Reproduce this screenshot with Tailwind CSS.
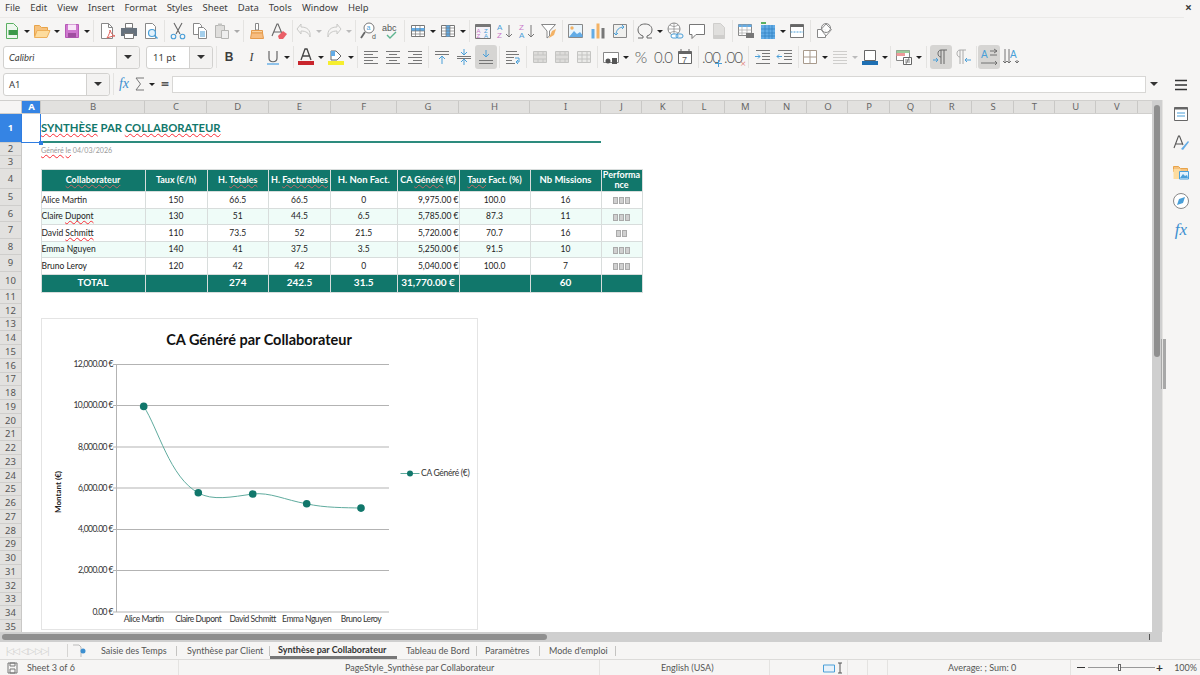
<!DOCTYPE html>
<html lang="fr">
<head>
<meta charset="UTF-8">
<title>Synthèse par Collaborateur - LibreOffice Calc</title>
<script src="https://cdn.jsdelivr.net/npm/@tailwindcss/browser@4"></script>
</head>
<body class="bg-[#f6f5f4] overflow-hidden">
<div class="w-[1200px] h-[675px] flex flex-col font-['Noto_Sans',sans-serif] text-[#3d3d3d] [&_svg]:shrink-0">

  <!-- menu bar -->
  <div class="h-[18px] flex items-center justify-between pl-[5px] pr-[7px] text-[9.5px] border-b border-[#ebeae8] mr-[16px]">
    <div class="flex gap-[10px]">
      <span>File</span><span>Edit</span><span>View</span><span>Insert</span><span>Format</span><span>Styles</span><span>Sheet</span><span>Data</span><span>Tools</span><span>Window</span><span>Help</span>
    </div>
  </div>
  <span class="absolute left-[1185px] top-[1px] text-[12px] font-bold leading-[14px]">×</span>

  <!-- standard toolbar -->
  <div class="h-[26px] flex items-center pl-[1px]">
    <svg class="w-[22px] h-[18px]" viewBox="0 0 18 18"><path d="M3.500 1.500h7l4 4v11h-11z" fill="#eef7ee" stroke="#5bb062"/><path d="M5.500 8h9v5h-9z" fill="#3c9a49"/></svg>
    <span class="w-[8px] flex justify-center"><i class="border-x-[3px] border-t-[3px] border-x-transparent border-t-[#222]"></i></span>
    <svg class="w-[22px] h-[18px]" viewBox="0 0 18 18"><path d="M1.500 3.500h5l2 2h6v3h-10l-3 6z" fill="#f6c27e" stroke="#e8a44a"/><path d="M4 8.500h13l-3 7H1.500z" fill="#fddc9e" stroke="#eeb05a"/></svg>
    <span class="w-[8px] flex justify-center"><i class="border-x-[3px] border-t-[3px] border-x-transparent border-t-[#222]"></i></span>
    <svg class="w-[22px] h-[18px]" viewBox="0 0 18 18"><path d="M2.500 2.500h13v13h-13z" fill="#cf78cf" stroke="#b658b6"/><path d="M5 2.500h8V8H5z" fill="#f8e6f8"/><path d="M5 11h8v4.500H5z" fill="#a04ea0"/></svg>
    <span class="w-[8px] flex justify-center"><i class="border-x-[3px] border-t-[3px] border-x-transparent border-t-[#222]"></i></span>
    <i class="w-px h-[22px] bg-[#e4e3e1] mx-[2px]"></i>
    <svg class="w-[22px] h-[18px]" viewBox="0 0 18 18"><path d="M3.500 1.500h7l4 4v11h-11z" fill="#fff" stroke="#888"/><path d="M10.500 1.500v4h4" fill="none" stroke="#888"/><path d="M9 16c2-3 3-6 3-8 1 3 2 5 5 6-3 0-5 1-8 2z" fill="none" stroke="#e0635c"/></svg>
    <svg class="w-[22px] h-[18px]" viewBox="0 0 18 18"><path d="M5.500 1.500h7V6h-7z" fill="#fff" stroke="#777"/><path d="M1 6h16v8H1z" fill="#66717c"/><path d="M4.500 11.500h9v5h-9z" fill="#fff" stroke="#777"/></svg>
    <svg class="w-[22px] h-[18px]" viewBox="0 0 18 18"><path d="M3.500 1.500h7l3 3v12h-10z" fill="#fff" stroke="#888"/><circle cx="10" cy="11" r="3.500" fill="#e2f1fb" stroke="#4a9fd8" stroke-width="1.200"/><path d="M12.500 13.500l3 3" stroke="#4a9fd8" stroke-width="1.400"/></svg>
    <i class="w-px h-[22px] bg-[#e4e3e1] mx-[2px]"></i>
    <svg class="w-[22px] h-[18px]" viewBox="0 0 18 18"><path d="M5 1l6 11M13 1L7 12" stroke="#666" stroke-width="1.100" fill="none"/><circle cx="4.500" cy="14.500" r="2.300" fill="none" stroke="#4a9fd8" stroke-width="1.100"/><circle cx="13.500" cy="14.500" r="2.300" fill="none" stroke="#4a9fd8" stroke-width="1.100"/></svg>
    <svg class="w-[22px] h-[18px]" viewBox="0 0 18 18"><path d="M2.500 1.500h6l2 2v9h-8z" fill="#fff" stroke="#888"/><path d="M7.500 5.500h5l3 3v8h-8z" fill="#fff" stroke="#888"/><path d="M9 10h5M9 12h5M9 14h5" stroke="#4a9fd8"/></svg>
    <svg class="w-[22px] h-[18px]" viewBox="0 0 18 18"><path d="M2.500 3.500h9v12h-9z" fill="#dfdedc" stroke="#b5b5b3"/><path d="M5 1.500h4V4H5z" fill="#c4c4c2"/><path d="M8.500 8.500h7v8h-7z" fill="#eee" stroke="#b5b5b3"/></svg>
    <span class="w-[8px] flex justify-center"><i class="border-x-[3px] border-t-[3px] border-x-transparent border-t-[#aaa]"></i></span>
    <i class="w-px h-[22px] bg-[#e4e3e1] mx-[2px]"></i>
    <svg class="w-[22px] h-[18px]" viewBox="0 0 18 18"><path d="M7.500 1.500h3V8h-3z" fill="#fff" stroke="#888"/><path d="M3.500 8.500h11v2.500h-11z" fill="#f9d3a2" stroke="#e59a4a"/><path d="M3.500 11h11l1 5.500h-13z" fill="#f7bd80" stroke="#e59a4a"/></svg>
    <svg class="w-[22px] h-[18px]" viewBox="0 0 18 18"><path d="M2 14L7 2h1l5 12M4 10h7" fill="none" stroke="#666" stroke-width="1.100"/><path d="M8 14l5-5 4 3-4 5H9z" fill="#ea5f67"/></svg>
    <i class="w-px h-[22px] bg-[#e4e3e1] ml-[2px]"></i>
    <svg class="w-[22px] h-[18px]" viewBox="0 0 18 18"><path d="M2 7l4-5v3c6 0 10 3 9 10-1-4-4-6-9-6v3z" fill="none" stroke="#c9c9c7"/></svg>
    <span class="w-[8px] flex justify-center"><i class="border-x-[3px] border-t-[3px] border-x-transparent border-t-[#bbb]"></i></span>
    <svg class="w-[22px] h-[18px]" viewBox="0 0 18 18"><path d="M16 7l-4-5v3C6 5 2 8 3 15c1-4 4-6 9-6v3z" fill="none" stroke="#c9c9c7"/></svg>
    <span class="w-[8px] flex justify-center"><i class="border-x-[3px] border-t-[3px] border-x-transparent border-t-[#bbb]"></i></span>
    <i class="w-px h-[22px] bg-[#e4e3e1] mx-[2px]"></i>
    <svg class="w-[22px] h-[18px]" viewBox="0 0 18 18"><circle cx="9" cy="6" r="5" fill="#fff" stroke="#777"/><path d="M5 10l-4 6" stroke="#666" stroke-width="1.800"/><text x="6.500" y="8" font-size="7" fill="#4a9fd8" font-family="Liberation Sans">a</text><text x="12" y="17" font-size="7" fill="#555" font-family="Liberation Sans">d</text></svg>
    <svg class="w-[22px] h-[18px]" viewBox="0 0 18 18"><text x="0" y="9" font-size="9" fill="#555" font-family="Liberation Sans">abc</text><path d="M5 13l3 3 6-6" fill="none" stroke="#5db590" stroke-width="1.400"/></svg>
    <i class="w-px h-[22px] bg-[#e4e3e1] mx-[2px]"></i>
    <svg class="w-[22px] h-[18px]" viewBox="0 0 18 18"><path d="M2.500 3.500h13v11h-13z" fill="#fff" stroke="#777"/><path d="M2.500 6h13v3h-13z" fill="#63ace6"/><path d="M2.500 9h13M2.500 12h13M6.500 3.500v11M11 3.500v11" stroke="#777" stroke-width=".7"/></svg>
    <span class="w-[8px] flex justify-center"><i class="border-x-[3px] border-t-[3px] border-x-transparent border-t-[#222]"></i></span>
    <svg class="w-[22px] h-[18px]" viewBox="0 0 18 18"><path d="M2.500 3.500h13v11h-13z" fill="#fff" stroke="#777"/><path d="M7 3.500h4v11H7z" fill="#63ace6"/><path d="M2.500 6h13M2.500 9h13M2.500 12h13M7 3.500v11M11 3.500v11" stroke="#777" stroke-width=".7"/></svg>
    <span class="w-[8px] flex justify-center"><i class="border-x-[3px] border-t-[3px] border-x-transparent border-t-[#222]"></i></span>
    <i class="w-px h-[22px] bg-[#e4e3e1] mx-[2px]"></i>
    <svg class="w-[22px] h-[18px]" viewBox="0 0 18 18"><path d="M1.500 2.500h15v14h-15z" fill="#f5f2f7" stroke="#777"/><path d="M1.500 2.500h15V5h-15z" fill="#777"/><text x="2.500" y="11" font-size="6" fill="#c878c8" font-family="Liberation Sans">A</text><text x="2.500" y="16" font-size="6" fill="#c878c8" font-family="Liberation Sans">Z</text><text x="10" y="11" font-size="6" fill="#4a9fd8" font-family="Liberation Sans">Z</text><text x="10" y="16" font-size="6" fill="#4a9fd8" font-family="Liberation Sans">A</text></svg>
    <svg class="w-[22px] h-[18px]" viewBox="0 0 18 18"><text x="1" y="8" font-size="8" fill="#4a9fd8" font-family="Liberation Sans">A</text><text x="1" y="16" font-size="8" fill="#c878c8" font-family="Liberation Sans">Z</text><path d="M13 3v12M10 12l3 3 3-3" fill="none" stroke="#777"/></svg>
    <svg class="w-[22px] h-[18px]" viewBox="0 0 18 18"><text x="1" y="8" font-size="8" fill="#c878c8" font-family="Liberation Sans">Z</text><text x="1" y="16" font-size="8" fill="#4a9fd8" font-family="Liberation Sans">A</text><path d="M13 3v12M10 12l3 3 3-3" fill="none" stroke="#777"/></svg>
    <svg class="w-[22px] h-[18px]" viewBox="0 0 18 18"><path d="M1.500 2.500h14l-6 6.500v5l-2.500 2V9z" fill="#fff" stroke="#888"/><path d="M9 16l3-7 4-2-2 6z" fill="#f3b265"/></svg>
    <i class="w-px h-[22px] bg-[#e4e3e1] mx-[2px]"></i>
    <svg class="w-[22px] h-[18px]" viewBox="0 0 18 18"><path d="M1.500 2.500h14v13h-14z" fill="#eaf5fc" stroke="#888"/><circle cx="5" cy="6" r="1.700" fill="#f3b265"/><path d="M2 15l5-6 3 3 3-2 2.500 3v2z" fill="#63ace6"/></svg>
    <svg class="w-[22px] h-[18px]" viewBox="0 0 18 18"><path d="M2.500 7h3v9.500h-3z" fill="#63ace6"/><path d="M7.500 1.500h3v15h-3z" fill="#f3b265"/><path d="M12.500 6h3v10.500h-3z" fill="#777"/></svg>
    <svg class="w-[22px] h-[18px]" viewBox="0 0 18 18"><path d="M2.500 2.500h13v13h-13z" fill="#f0f0ee" stroke="#888"/><path d="M5 13c0-5 3-8 8-8M11 3l2 2-2 2M3 11l2 2 2-2" fill="none" stroke="#4a9fd8"/></svg>
    <i class="w-px h-[22px] bg-[#e4e3e1] ml-[2px]"></i>
    <svg class="w-[22px] h-[18px]" viewBox="0 0 18 18"><path d="M2 16h5v-2C4 13 2 11 2 8c0-4 3-6 7-6s7 2 7 6c0 3-2 5-5 6v2h5" fill="none" stroke="#666"/></svg>
    <span class="w-[8px] flex justify-center"><i class="border-x-[3px] border-t-[3px] border-x-transparent border-t-[#222]"></i></span>
    <svg class="w-[22px] h-[18px]" viewBox="0 0 18 18"><circle cx="8" cy="7" r="6" fill="#fff" stroke="#888"/><path d="M2 7h12M8 1v12M4 3c3 2 5 2 8 0M4 11c3-2 5-2 8 0" fill="none" stroke="#888" stroke-width=".7"/><rect x="5" y="12" width="7" height="4" rx="2" fill="#fff" stroke="#4a9fd8"/><rect x="10" y="12" width="7" height="4" rx="2" fill="none" stroke="#4a9fd8"/></svg>
    <svg class="w-[22px] h-[18px]" viewBox="0 0 18 18"><path d="M1.500 2.500h15v10H8l-4 4v-4H1.500z" fill="#fff" stroke="#777"/></svg>
    <svg class="w-[22px] h-[18px]" viewBox="0 0 18 18"><path d="M3.500 1.500h7l4 4v11h-11z" fill="#e0dfdd" stroke="#cfcecc"/><path d="M3.500 13h11v3.500h-11z" fill="#cfcecc"/></svg>
    <i class="w-px h-[22px] bg-[#e4e3e1] mx-[2px]"></i>
    <svg class="w-[22px] h-[18px]" viewBox="0 0 18 18"><path d="M1.500 2.500h13v11h-13z" fill="#fff" stroke="#888"/><path d="M1.500 2.500h13V5h-13z" fill="#63ace6"/><path d="M1.500 8h13M1.500 11h13M5 2.500v11M10 2.500v11" stroke="#aaa" stroke-width=".7"/><path d="M9 11h8v5H9z" fill="#777"/></svg>
    <svg class="w-[22px] h-[18px]" viewBox="0 0 18 18"><path d="M2 3h14v14H2z" fill="#63ace6"/><path d="M2 7h14M2 11h14M2 14h14M6 3v14M10 3v14M13 3v14" stroke="#2f80bf" stroke-width=".7"/><path d="M2 1h5" stroke="#5bb062" stroke-width="2"/></svg>
    <span class="w-[7px] flex justify-center"><i class="border-x-[3px] border-t-[3px] border-x-transparent border-t-[#222]"></i></span>
    <svg class="w-[22px] h-[18px]" viewBox="0 0 18 18"><path d="M2.500 2.500h13v13h-13z" fill="#fff" stroke="#777"/><path d="M2.500 2.500h13V5h-13z" fill="#666"/><path d="M2.500 10h13" stroke="#4a9fd8" stroke-dasharray="2 1"/></svg>
    <i class="w-px h-[22px] bg-[#e4e3e1] mx-[2px]"></i>
    <svg class="w-[22px] h-[18px]" viewBox="0 0 18 18"><path d="M2.500 7.500h8v8h-8z" fill="#fff" stroke="#888"/><path d="M11 2l5.500 5.500L11 14 6 7.500z" fill="#fff" stroke="#888" opacity=".9"/><circle cx="11" cy="6" r="4.500" fill="none" stroke="#888"/></svg>
  </div>

  <!-- formatting toolbar -->
  <div class="h-[26px] flex items-center pl-[3px]">
    <div class="w-[137px] h-[23px] flex bg-white border border-[#d2d1cf] rounded-[3px]">
      <span class="flex-1 pl-[5px] italic text-[9.5px] leading-[21px] font-['Lato',sans-serif]">Calibri</span>
      <span class="w-[23px] bg-[#f3f2f1] border-l border-[#d2d1cf] rounded-r-[3px] flex items-center justify-center"><i class="border-x-[4px] border-t-[4px] border-x-transparent border-t-[#333]"></i></span>
    </div>
    <div class="w-[67px] h-[23px] ml-[6px] flex bg-white border border-[#d2d1cf] rounded-[3px]">
      <span class="flex-1 pl-[6px] text-[9.5px] leading-[21px]">11 pt</span>
      <span class="w-[23px] bg-[#f3f2f1] border-l border-[#d2d1cf] rounded-r-[3px] flex items-center justify-center"><i class="border-x-[4px] border-t-[4px] border-x-transparent border-t-[#333]"></i></span>
    </div>
    <i class="w-px h-[22px] bg-[#e4e3e1] ml-[3px] mr-[1px]"></i>
    <span class="w-[22px] text-center font-bold text-[12px] leading-[18px] font-['Liberation_Sans',sans-serif]">B</span>
    <span class="w-[23px] text-center italic text-[12px] leading-[18px] font-['Liberation_Serif',serif]">I</span>
    <svg class="w-[20px] h-[18px]" viewBox="0 0 18 18"><path d="M5 3v7c0 5 8 5 8 0V3" fill="none" stroke="#666" stroke-width="1.200"/><path d="M3 16h12" stroke="#63ace6" stroke-width="1.400"/></svg>
    <span class="w-[8px] flex justify-center"><i class="border-x-[3px] border-t-[3px] border-x-transparent border-t-[#222]"></i></span>
    <i class="w-px h-[22px] bg-[#e4e3e1] mx-[1.500px]"></i>
    <svg class="w-[22px] h-[18px]" viewBox="0 0 18 18"><path d="M4 12L8 1h2l4 11M6 8h6" fill="none" stroke="#444" stroke-width="1.300"/><path d="M1 13h16v4H1z" fill="#c9252c"/></svg>
    <span class="w-[8px] flex justify-center"><i class="border-x-[3px] border-t-[3px] border-x-transparent border-t-[#222]"></i></span>
    <svg class="w-[22px] h-[18px]" viewBox="0 0 18 18"><path d="M4 3h5l5 5-4 4H4z" fill="#fff" stroke="#666"/><path d="M4 3h4v5H4z" fill="#63ace6"/><path d="M1 13h16v4H1z" fill="#f6ee2e"/></svg>
    <span class="w-[8px] flex justify-center"><i class="border-x-[3px] border-t-[3px] border-x-transparent border-t-[#222]"></i></span>
    <i class="w-px h-[22px] bg-[#e4e3e1] mx-[2px]"></i>
    <svg class="w-[22px] h-[18px]" viewBox="0 0 18 18"><path d="M2 3.500h14M2 6.500h9M2 9.500h14M2 12.500h9M2 15.500h14" stroke="#777"/></svg>
    <svg class="w-[22px] h-[18px]" viewBox="0 0 18 18"><path d="M2 3.500h14M5 6.500h8M2 9.500h14M5 12.500h8M2 15.500h14" stroke="#777"/></svg>
    <svg class="w-[22px] h-[18px]" viewBox="0 0 18 18"><path d="M2 3.500h14M7 6.500h9M2 9.500h14M7 12.500h9M2 15.500h14" stroke="#777"/></svg>
    <i class="w-px h-[22px] bg-[#e4e3e1] mx-[2px]"></i>
    <svg class="w-[22px] h-[18px]" viewBox="0 0 18 18"><path d="M2 3.500h14M2 6.500h14" stroke="#777"/><path d="M9 16V9M6 11l3-3 3 3" fill="none" stroke="#4a9fd8"/></svg>
    <svg class="w-[22px] h-[18px]" viewBox="0 0 18 18"><path d="M2 8.500h14M2 10.500h14" stroke="#777"/><path d="M9 1v6M6 4l3 3 3-3M9 17v-6M6 14l3-3 3 3" fill="none" stroke="#4a9fd8"/></svg>
    <span class="w-[22px] h-[24px] bg-[#d6d5d3] rounded-[3px] flex items-center justify-center"><svg class="w-[18px] h-[18px]" viewBox="0 0 18 18"><path d="M2 12.500h14M2 15.500h14" stroke="#777"/><path d="M9 2v7M6 6l3 3 3-3" fill="none" stroke="#4a9fd8"/></svg></span>
    <i class="w-px h-[22px] bg-[#e4e3e1] mx-[2px]"></i>
    <svg class="w-[22px] h-[18px]" viewBox="0 0 18 18"><path d="M2 3.500h11M2 6.500h13M2 9.500h8M2 12.500h6M2 15.500h9" stroke="#777"/><path d="M11 10h4v4h-3M14 12l-2 2 2 2" fill="none" stroke="#4a9fd8"/></svg>
    <i class="w-px h-[22px] bg-[#e4e3e1] mx-[2px]"></i>
    <svg class="w-[22px] h-[18px]" viewBox="0 0 18 18"><path d="M2.500 3.500h13v11h-13z" fill="#dddcda" stroke="#c4c4c2"/><path d="M2.500 7h13M2.500 11h13M7 3.500V7M12 3.500V7M7 11v3.500M12 11v3.500" stroke="#c4c4c2"/></svg>
    <svg class="w-[22px] h-[18px]" viewBox="0 0 18 18"><path d="M2.500 3.500h13v11h-13z" fill="#dddcda" stroke="#c4c4c2"/><path d="M2.500 7h13M2.500 11h13M7 3.500V7M12 3.500V7M7 11v3.500M12 11v3.500" stroke="#c4c4c2"/></svg>
    <svg class="w-[22px] h-[18px]" viewBox="0 0 18 18"><path d="M2.500 3.500h13v11h-13z" fill="#eaeae8" stroke="#c4c4c2"/><path d="M2.500 7h13M2.500 11h13M7 3.500v11M12 3.500v11" stroke="#c4c4c2"/></svg>
    <i class="w-px h-[22px] bg-[#e4e3e1] mx-[2px]"></i>
    <svg class="w-[22px] h-[18px]" viewBox="0 0 18 18"><path d="M1.500 4.500h15v10h-15z" fill="#fff" stroke="#888"/><circle cx="6" cy="13" r="2.500" fill="#555"/><path d="M10 10h5v6h-5z" fill="#555"/></svg>
    <span class="w-[8px] flex justify-center"><i class="border-x-[3px] border-t-[3px] border-x-transparent border-t-[#222]"></i></span>
    <span class="w-[22px] text-center font-['Lato',sans-serif] font-light text-[16px] leading-[18px] text-[#555]">%</span>
    <span class="w-[22px] text-center font-['Lato',sans-serif] font-light text-[15px] leading-[18px] text-[#555] tracking-[-1px]">0.0</span>
    <svg class="w-[22px] h-[18px]" viewBox="0 0 18 18"><path d="M2.500 3.500h13v12h-13z" fill="#fff" stroke="#666"/><path d="M2.500 3.500h13V6h-13z" fill="#666"/><path d="M5 1v3M13 1v3" stroke="#666"/><text x="6" y="14.500" font-size="9" fill="#555" font-family="Liberation Sans">7</text></svg>
    <i class="w-px h-[22px] bg-[#e4e3e1] ml-[2px] mr-[1px]"></i>
    <span class="relative w-[22px] text-center font-['Lato',sans-serif] font-light text-[15px] leading-[18px] text-[#555] tracking-[-1px]">.00<i class="absolute right-[0px] bottom-[-1px] w-[7px] h-[7px] bg-[linear-gradient(#4a9fd8,#4a9fd8),linear-gradient(#4a9fd8,#4a9fd8)] bg-[length:7px_1px,1px_7px] bg-center bg-no-repeat"></i></span>
    <span class="relative w-[22px] text-center font-['Lato',sans-serif] font-light text-[15px] leading-[18px] text-[#555] tracking-[-1px]">.00<i class="absolute right-[-1px] bottom-[-2px] not-italic text-[10px] leading-[9px] text-[#d9473f]">×</i></span>
    <i class="w-px h-[22px] bg-[#e4e3e1] mx-[3.500px]"></i>
    <svg class="w-[22px] h-[18px]" viewBox="0 0 18 18"><path d="M2 2.500h14M8 5.500h8M8 8.500h8M8 11.500h8M2 15.500h14" stroke="#777"/><path d="M1 8.500h5M4 6.500l2 2-2 2" fill="none" stroke="#4a9fd8"/></svg>
    <svg class="w-[22px] h-[18px]" viewBox="0 0 18 18"><path d="M2 2.500h14M8 5.500h8M8 8.500h8M8 11.500h8M2 15.500h14" stroke="#777"/><path d="M1 8.500h5M3 6.500l-2 2 2 2" fill="none" stroke="#4a9fd8"/></svg>
    <i class="w-px h-[22px] bg-[#e4e3e1] ml-[2px]"></i>
    <svg class="w-[22px] h-[18px]" viewBox="0 0 18 18"><path d="M2.500 2.500h13v13h-13zM9 2.500v13M2.500 9h13" fill="#fff" stroke="#a89a8c"/></svg>
    <span class="w-[8px] flex justify-center"><i class="border-x-[3px] border-t-[3px] border-x-transparent border-t-[#222]"></i></span>
    <svg class="w-[22px] h-[18px]" viewBox="0 0 18 18"><path d="M2 3.500h14M2 6.500h14M2 9.500h14M2 12.500h14M2 15.500h14" stroke="#cfcecc"/></svg>
    <span class="w-[8px] flex justify-center"><i class="border-x-[3px] border-t-[3px] border-x-transparent border-t-[#bbb]"></i></span>
    <svg class="w-[22px] h-[18px]" viewBox="0 0 18 18"><path d="M3.500 2.500h11v10h-11z" fill="#fff" stroke="#666"/><path d="M1 13h16v4H1z" fill="#1f6fb2"/></svg>
    <span class="w-[7px] flex justify-center"><i class="border-x-[3px] border-t-[3px] border-x-transparent border-t-[#222]"></i></span>
    <i class="w-px h-[22px] bg-[#e4e3e1] mx-[2px]"></i>
    <svg class="w-[22px] h-[18px]" viewBox="0 0 18 18"><path d="M1.500 2.500h13v10h-13z" fill="#fff" stroke="#888"/><path d="M1.500 2.500h13V5h-13z" fill="#9ccc9c"/><path d="M1.500 5H10v3H1.500z" fill="#ee9a9a"/><path d="M8.500 9.500h8v7h-8z" fill="#fff" stroke="#666"/><path d="M10 12h5M10 14h5M14 10l-3 6" stroke="#666" stroke-width=".8"/></svg>
    <span class="w-[8px] flex justify-center"><i class="border-x-[3px] border-t-[3px] border-x-transparent border-t-[#222]"></i></span>
    <i class="w-px h-[22px] bg-[#e4e3e1] mx-[3px]"></i>
    <span class="w-[22px] h-[24px] bg-[#d6d5d3] rounded-[3px] flex items-center justify-center"><svg class="w-[18px] h-[18px]" viewBox="0 0 18 18"><path d="M9 16V2h6M12 2v14M9 2C5 2 5 9 9 9" fill="none" stroke="#666"/><path d="M1 12h5M4 10l2 2-2 2" fill="none" stroke="#4a9fd8"/></svg></span>
    <svg class="w-[22px] h-[18px]" viewBox="0 0 18 18"><path d="M6 16V2h6M9 2v14M6 2C2 2 2 9 6 9" fill="none" stroke="#aaa"/><path d="M11 12h6M13 10l-2 2 2 2" fill="none" stroke="#4a9fd8"/></svg>
    <i class="w-px h-[22px] bg-[#e4e3e1] mx-[1.500px]"></i>
    <span class="w-[22px] h-[24px] bg-[#d6d5d3] rounded-[3px] flex items-center justify-center"><svg class="w-[18px] h-[18px]" viewBox="0 0 18 18"><text x="1" y="10" font-size="10" fill="#4a9fd8" font-family="Liberation Sans">A</text><path d="M10 3h7M10 7h7M1 15h16M14 1l3 2-3 2M15 13l2 2-2 2" fill="none" stroke="#666" stroke-width=".9"/></svg></span>
    <svg class="w-[22px] h-[18px]" viewBox="0 0 18 18"><text x="8" y="10" font-size="10" fill="#4a9fd8" font-family="Liberation Sans">A</text><path d="M3 1v14M7 1v14M15 12v3M1 13l2 2 2-2M5 13l2 2 2-2M13 13l2 2 2-2" fill="none" stroke="#666" stroke-width=".9"/></svg>
  </div>

  <!-- formula bar -->
  <div class="h-[30px] flex items-center pl-[3px] pb-[2px] mr-[38px]">
    <div class="w-[107px] h-[23px] flex bg-white border border-[#d2d1cf] rounded-[3px]">
      <span class="flex-1 pl-[5px] text-[9.5px] leading-[21px]">A1</span>
      <span class="w-[23px] bg-[#f3f2f1] border-l border-[#d2d1cf] rounded-r-[3px] flex items-center justify-center"><i class="border-x-[4px] border-t-[4px] border-x-transparent border-t-[#333]"></i></span>
    </div>
    <i class="w-px h-[22px] bg-[#e4e3e1] ml-[3px]"></i>
    <span class="w-[20px] text-center italic text-[14px] leading-[18px] text-[#3c8fd0] font-['Liberation_Serif',serif]">fx</span>
    <svg class="w-[12px] h-[18px]" viewBox="0 0 12 18"><path d="M10 3H2l4.500 6L2 15h8" fill="none" stroke="#777"/></svg>
    <span class="w-[12px] flex justify-center"><i class="border-x-[3px] border-t-[3px] border-x-transparent border-t-[#222]"></i></span>
    <span class="w-[14px] text-center text-[14px] leading-[18px] font-bold text-[#555]">=</span>
    <div class="flex-1 h-[17px] bg-white border border-[#d8d7d5]"></div>
    <span class="w-[16px] flex justify-center"><i class="border-x-[4px] border-t-[4px] border-x-transparent border-t-[#333]"></i></span>
  </div>

  <!-- sheet area and sidebar -->
  <div class="h-[532px] flex">
    <div class="w-[1152px] overflow-hidden">
      <!-- column headers -->
      <div class="h-[14px] flex bg-[#e2e1df] border-y border-[#d0cfcd] text-[9.5px] leading-[12px] text-[#666] text-center [&>span]:border-r [&>span]:border-[#c9c8c6] [&>span]:shrink-0 [&>span]:pl-px">
        <span class="w-[22px] bg-[#f6f5f4]"></span>
        <span class="w-[19px] bg-[#3584e4] text-white font-bold">A</span>
        <span class="w-[104px]">B</span><span class="w-[62px]">C</span><span class="w-[61.500px]">D</span><span class="w-[62px]">E</span><span class="w-[66.500px]">F</span><span class="w-[62px]">G</span><span class="w-[71px]">H</span><span class="w-[71px]">I</span><span class="w-[41px]">J</span>
        <span class="w-[41.300px]">K</span><span class="w-[41.300px]">L</span><span class="w-[41.300px]">M</span><span class="w-[41.300px]">N</span><span class="w-[41.300px]">O</span><span class="w-[41.300px]">P</span><span class="w-[41.300px]">Q</span><span class="w-[41.300px]">R</span><span class="w-[41.300px]">S</span><span class="w-[41.300px]">T</span><span class="w-[41.300px]">U</span><span class="w-[41.300px]">V</span>
      </div>
      <div class="flex h-[518px] overflow-hidden">
        <!-- row headers -->
        <div class="w-[22px] shrink-0 bg-[#e2e1df] border-r border-[#c9c8c6] text-[9.5px] text-[#555] text-center [&>span]:flex [&>span]:items-center [&>span]:justify-center [&>span]:border-b [&>span]:border-[#cfcecc] [&>span]:pt-px">
          <span class="h-[29px] bg-[#3584e4] text-white font-bold">1</span><span class="h-[13px]">2</span><span class="h-[13px]">3</span><span class="h-[20px]">4</span><span class="h-[17px]">5</span><span class="h-[16px]">6</span><span class="h-[17px]">7</span><span class="h-[16px]">8</span><span class="h-[17px]">9</span><span class="h-[18px]">10</span>
          <span class="h-[13.750px]">11</span><span class="h-[13.750px]">12</span><span class="h-[13.750px]">13</span><span class="h-[13.750px]">14</span><span class="h-[13.750px]">15</span><span class="h-[13.750px]">16</span><span class="h-[13.750px]">17</span><span class="h-[13.750px]">18</span><span class="h-[13.750px]">19</span><span class="h-[13.750px]">20</span><span class="h-[13.750px]">21</span><span class="h-[13.750px]">22</span><span class="h-[13.750px]">23</span><span class="h-[13.750px]">24</span><span class="h-[13.750px]">25</span><span class="h-[13.750px]">26</span><span class="h-[13.750px]">27</span><span class="h-[13.750px]">28</span><span class="h-[13.750px]">29</span><span class="h-[13.750px]">30</span><span class="h-[13.750px]">31</span><span class="h-[13.750px]">32</span><span class="h-[13.750px]">33</span><span class="h-[13.750px]">34</span><span class="h-[13.750px]">35</span>
        </div>
        <!-- cells -->
        <div class="relative flex-1 bg-white font-['Lato',sans-serif] text-[8.5px] text-[#222]">
          <div class="absolute left-[-1px] top-[-1px] w-[20px] h-[30px] border border-[#2f7de1]"></div>
          <div class="absolute left-[17px] top-[27px] w-[4px] h-[4px] bg-[#2f7de1] z-10"></div>
          <div class="ml-[19px] w-[560px] h-[29px] pt-[1px] flex items-center border-b-2 border-[#2d8b7e] font-bold text-[11.300px] text-[#11776b]">
            <span><span class="underline decoration-wavy decoration-red-500 decoration-[0.5px] underline-offset-1">SYNTHÈSE</span> PAR <span class="underline decoration-wavy decoration-red-500 decoration-[0.5px] underline-offset-1">COLLABORATEUR</span></span>
          </div>
          <div class="ml-[19px] h-[13px] text-[7.100px] leading-[15px] text-[#999]"><span class="underline decoration-wavy decoration-red-500 decoration-[0.5px]">Généré</span> <span class="underline decoration-wavy decoration-red-500 decoration-[0.5px]">le</span> 04/03/2026</div>
          <div class="h-[13px]"></div>
          <table class="ml-[18.500px] w-[602px] table-fixed text-center [&_td]:border [&_td]:border-[#d8dddc] [&_td]:p-0 leading-none">
            <colgroup><col class="w-[104px]"><col class="w-[62px]"><col class="w-[61.500px]"><col class="w-[62px]"><col class="w-[66.500px]"><col class="w-[62px]"><col class="w-[71px]"><col class="w-[71px]"><col class="w-[41px]"></colgroup>
            <tr class="h-[20px] bg-[#11776b] text-white font-bold text-[9px] [&_td]:border-[#5ba599] [&_td]:pb-[2px]">
              <td><span class="underline decoration-wavy decoration-red-400/70 decoration-[0.5px]">Collaborateur</span></td><td>Taux (€/h)</td><td>H. <span class="underline decoration-wavy decoration-red-400/70 decoration-[0.5px]">Totales</span></td><td>H. <span class="underline decoration-wavy decoration-red-400/70 decoration-[0.5px]">Facturables</span></td><td class="text-[9.500px]">H. Non Fact.</td><td>CA <span class="underline decoration-wavy decoration-red-400/70 decoration-[0.5px]">Généré</span> (€)</td><td><span class="underline decoration-wavy decoration-red-400/70 decoration-[0.5px]">Taux</span> Fact. (%)</td><td class="text-[9.500px]">Nb Missions</td><td class="text-[9px] leading-[9.500px]">Performa<br>nce</td>
            </tr>
            <tr class="h-[17px]"><td class="text-left pl-[1px]">Alice Martin</td><td>150</td><td>66.5</td><td>66.5</td><td>0</td><td class="text-right pr-[1px]">9,975.00 €</td><td>100.0</td><td>16</td><td><span class="inline-flex gap-px align-middle [&>i]:w-[5px] [&>i]:h-[7px] [&>i]:bg-[#d0d0d0] [&>i]:border [&>i]:border-[#aaa]"><i></i><i></i><i></i></span></td></tr>
            <tr class="h-[16px] bg-[#effcf8]"><td class="text-left pl-[1px]">Claire <span class="underline decoration-wavy decoration-red-500 decoration-[0.5px]">Dupont</span></td><td>130</td><td>51</td><td>44.5</td><td>6.5</td><td class="text-right pr-[1px]">5,785.00 €</td><td>87.3</td><td>11</td><td><span class="inline-flex gap-px align-middle [&>i]:w-[5px] [&>i]:h-[7px] [&>i]:bg-[#d0d0d0] [&>i]:border [&>i]:border-[#aaa]"><i></i><i></i><i></i></span></td></tr>
            <tr class="h-[17px]"><td class="text-left pl-[1px]">David <span class="underline decoration-wavy decoration-red-500 decoration-[0.5px]">Schmitt</span></td><td>110</td><td>73.5</td><td>52</td><td>21.5</td><td class="text-right pr-[1px]">5,720.00 €</td><td>70.7</td><td>16</td><td><span class="inline-flex gap-px align-middle [&>i]:w-[5px] [&>i]:h-[7px] [&>i]:bg-[#d0d0d0] [&>i]:border [&>i]:border-[#aaa]"><i></i><i></i></span></td></tr>
            <tr class="h-[16px] bg-[#effcf8]"><td class="text-left pl-[1px]">Emma Nguyen</td><td>140</td><td>41</td><td>37.5</td><td>3.5</td><td class="text-right pr-[1px]">5,250.00 €</td><td>91.5</td><td>10</td><td><span class="inline-flex gap-px align-middle [&>i]:w-[5px] [&>i]:h-[7px] [&>i]:bg-[#d0d0d0] [&>i]:border [&>i]:border-[#aaa]"><i></i><i></i><i></i></span></td></tr>
            <tr class="h-[17px]"><td class="text-left pl-[1px]">Bruno Leroy</td><td>120</td><td>42</td><td>42</td><td>0</td><td class="text-right pr-[1px]">5,040.00 €</td><td>100.0</td><td>7</td><td><span class="inline-flex gap-px align-middle [&>i]:w-[5px] [&>i]:h-[7px] [&>i]:bg-[#d0d0d0] [&>i]:border [&>i]:border-[#aaa]"><i></i><i></i><i></i></span></td></tr>
            <tr class="h-[18px] bg-[#11776b] text-white font-bold text-[10px] [&_td]:border-[#5ba599] [&_td]:pb-[3px]"><td>TOTAL</td><td></td><td>274</td><td>242.5</td><td>31.5</td><td>31,770.00 €</td><td></td><td>60</td><td></td></tr>
          </table>
          <!-- floating chart object -->
          <svg class="absolute left-[19px] top-[204px] w-[437px] h-[314px]" viewBox="41 318 437 314" font-family="Lato, sans-serif">
            <rect x="41.500" y="318.500" width="436" height="311" fill="#fff" stroke="#e4e4e4"/>
            <text x="259" y="345" text-anchor="middle" font-size="14.500" font-weight="700" fill="#111">CA Généré par Collaborateur</text>
            <g stroke="#b3b3b3"><path d="M113 364.500h276M113 405.500h276M113 447h276M113 488h276M113 529.500h276M113 570.500h276M113 612h276M116.500 364v248"/></g>
            <g font-size="8.500" fill="#333" text-anchor="end" letter-spacing="-.55"><text x="113" y="367">12,000.00 €</text><text x="113" y="408">10,000.00 €</text><text x="113" y="449.500">8,000.00 €</text><text x="113" y="490.500">6,000.00 €</text><text x="113" y="532">4,000.00 €</text><text x="113" y="573">2,000.00 €</text><text x="113" y="614.500">0.00 €</text></g>
            <g font-size="8.500" fill="#333" text-anchor="middle" letter-spacing="-.45"><text x="143.700" y="621.500">Alice Martin</text><text x="198.300" y="621.500">Claire Dupont</text><text x="252.700" y="621.500">David Schmitt</text><text x="306.700" y="621.500">Emma Nguyen</text><text x="361" y="621.500">Bruno Leroy</text></g>
            <text transform="translate(61 492) rotate(-90)" text-anchor="middle" font-size="8" font-weight="700" fill="#222">Montant (€)</text>
            <path d="M143.700 406.400C158 428 170 478 198.300 492.800C212 501 232 497 252.700 494C270 492 285 500 306.700 503.800C325 508 345 507.500 361 508.100" fill="none" stroke="#5fab9e"/>
            <g fill="#11776b"><circle cx="143.700" cy="406.400" r="3.800"/><circle cx="198.300" cy="492.800" r="3.800"/><circle cx="252.700" cy="494" r="3.800"/><circle cx="306.700" cy="503.800" r="3.800"/><circle cx="361" cy="508.100" r="3.800"/></g>
            <path d="M400.500 473.500h19" stroke="#5fab9e"/><circle cx="410" cy="473.500" r="3" fill="#11776b"/>
            <text x="421" y="476" font-size="8.500" fill="#333" letter-spacing="-.3">CA Généré (€)</text>
          </svg>
        </div>
      </div>
    </div>
    <!-- vertical scrollbar -->
    <div class="w-[10px] bg-[#cfcfcf] pt-[5px] pl-[2px]">
      <div class="w-[6px] h-[252px] bg-[#8f8f8f] rounded-full"></div>
    </div>
    <!-- sidebar -->
    <div class="relative w-[38px] flex flex-col items-center pt-0">
      <div class="absolute left-[-1px] top-[239px] w-[5px] h-[50px] bg-[#a8a8a8]"></div>
      <div class="absolute left-0 top-[0px] w-px h-[532px] bg-[#e4e3e1]"></div>
    </div>
  </div>

  <!-- horizontal scrollbar -->
  <div class="h-[10px] mr-[38px] bg-[#cfcfcf] flex items-center pl-[2px] relative">
    <div class="w-[545px] h-[6px] bg-[#8f8f8f] rounded-full"></div>
    <i class="absolute left-[1149px] top-[2px] w-px h-[6px] bg-[#555]"></i>
  </div>

  <!-- sheet tabs -->
  <div class="h-[17px] mr-[38px] flex items-center whitespace-nowrap font-['Lato',sans-serif] text-[9px] text-[#555]">
    <span class="w-[60px] ml-[6px] text-[#cfcfcd] text-[9px] tracking-[-1px] overflow-hidden">|◁◁ ◁ ▷ ▷▷|</span>
    <i class="w-px h-[13px] bg-[#d6d5d3] ml-[1px]"></i>
    <svg class="w-[22px] h-[14px] ml-[4px]" viewBox="0 0 22 14"><path d="M1 1h6l2 2v10" fill="none" stroke="#bbb"/><circle cx="11" cy="7" r="2.500" fill="#3c8fd0"/></svg>
    <span class="w-[82px] pl-[7px]">Saisie des Temps</span><i class="w-px h-[10px] bg-[#c4c3c1]"></i>
    <span class="w-[92px] pl-[10px]">Synthèse par Client</span><i class="w-px h-[10px] bg-[#c4c3c1]"></i>
    <span class="w-[127px] h-full pl-[8px] font-bold text-[#333] border-b-[3px] border-[#777] leading-[15px]">Synthèse par Collaborateur</span>
    <span class="w-[79px] pl-[9px]">Tableau de Bord</span><i class="w-px h-[10px] bg-[#c4c3c1]"></i>
    <span class="w-[62px] pl-[8px]">Paramètres</span><i class="w-px h-[10px] bg-[#c4c3c1]"></i>
    <span class="w-[75px] pl-[9px]">Mode d'emploi</span><i class="w-px h-[10px] bg-[#c4c3c1]"></i>
  </div>

  <!-- status bar -->
  <div class="h-[16px] flex items-center border-t border-[#dcdbd9] whitespace-nowrap font-['Lato',sans-serif] text-[9px] text-[#555] [&>span]:h-full [&>span]:border-r [&>span]:border-[#e4e3e1] [&>span]:leading-[15px]">
    <span class="w-[179px] shrink-0 flex items-center pl-[7px] gap-[9px]"><svg class="w-[11px] h-[12px]" viewBox="0 0 11 12"><path d="M1 1h9v10H1z" fill="none" stroke="#777"/><path d="M3 1h5v3H3zM3 7h5v4H3z" fill="none" stroke="#777"/></svg>Sheet 3 of 6</span>
    <span class="w-[421px] shrink-0 pl-[166px]">PageStyle_Synthèse par Collaborateur</span>
    <span class="w-[170px] shrink-0 pl-[61px]">English (USA)</span>
    <span class="w-[78px] shrink-0 flex items-center pl-[53px] gap-[2px]"><svg class="w-[20px] h-[12px]" viewBox="0 0 20 12"><path d="M.5 3h11v7H.5z" fill="#e8f2fa" stroke="#4a9fd8"/><path d="M17 1v10M15 1h4M15 11h4" stroke="#555"/></svg></span>
    <span class="w-[20px] shrink-0"></span>
    <span class="w-[20px] shrink-0"></span>
    <span class="w-[183px] shrink-0 pl-[60px]">Average: ; Sum: 0</span>
    <div class="flex-1 flex items-center pl-[6px] pr-[3px]">
      <span class="w-[8px] h-px bg-[#333] mr-[3px]"></span>
      <div class="relative w-[67px] h-px bg-[#999]"><i class="absolute left-[30px] top-[-3px] w-[3px] h-[7px] border border-[#666] bg-white"></i></div>
      <span class="text-[12px] leading-[12px] text-[#333] ml-[1px] font-bold">+</span>
      <span class="ml-auto">100%</span>
    </div>
  </div>

  <!-- sidebar deck icons -->
  <div class="absolute left-[1172px] top-[76px] w-[18px] flex flex-col gap-[11px]">
    <svg class="w-[18px] h-[18px]" viewBox="0 0 18 18"><path d="M3 4.500h12M3 9h12M3 13.500h12" stroke="#333" stroke-width="1.500"/></svg>
    <svg class="w-[18px] h-[18px]" viewBox="0 0 18 18"><path d="M2.500 2.500h13v13h-13z" fill="#fff" stroke="#666"/><path d="M2.500 2.500h13v2h-13z" fill="#666"/><path d="M5 8h8M5 11h8" stroke="#4a9fd8"/></svg>
    <svg class="w-[18px] h-[18px]" viewBox="0 0 18 18"><path d="M2 14L6.500 2h1L11 11M4 10h6" fill="none" stroke="#555" stroke-width="1.100"/><path d="M9 15l7-8 1 1-6 8z" fill="#63ace6"/></svg>
    <svg class="w-[18px] h-[18px]" viewBox="0 0 18 18"><path d="M1.500 3.500h5l2 2h7v3h-14z" fill="#f6c27e" stroke="#e8a44a"/><path d="M1.500 6h7v10h-7z" fill="#fddc9e"/><path d="M7.500 8.500h9v7.500h-9z" fill="#e2f1fb" stroke="#4a9fd8"/><path d="M8 15l3-4 2 2 2-1 1 3z" fill="#4a9fd8"/></svg>
    <svg class="w-[18px] h-[18px]" viewBox="0 0 18 18"><circle cx="9" cy="9" r="7.500" fill="#fff" stroke="#888"/><path d="M13 5l-6 2-2 6 6-2z" fill="#4a9fd8"/></svg>
    <span class="h-[18px] text-center italic text-[17px] leading-[18px] text-[#3c8fd0] font-['Liberation_Serif',serif]">fx</span>
  </div>
</div>
</body>
</html>
